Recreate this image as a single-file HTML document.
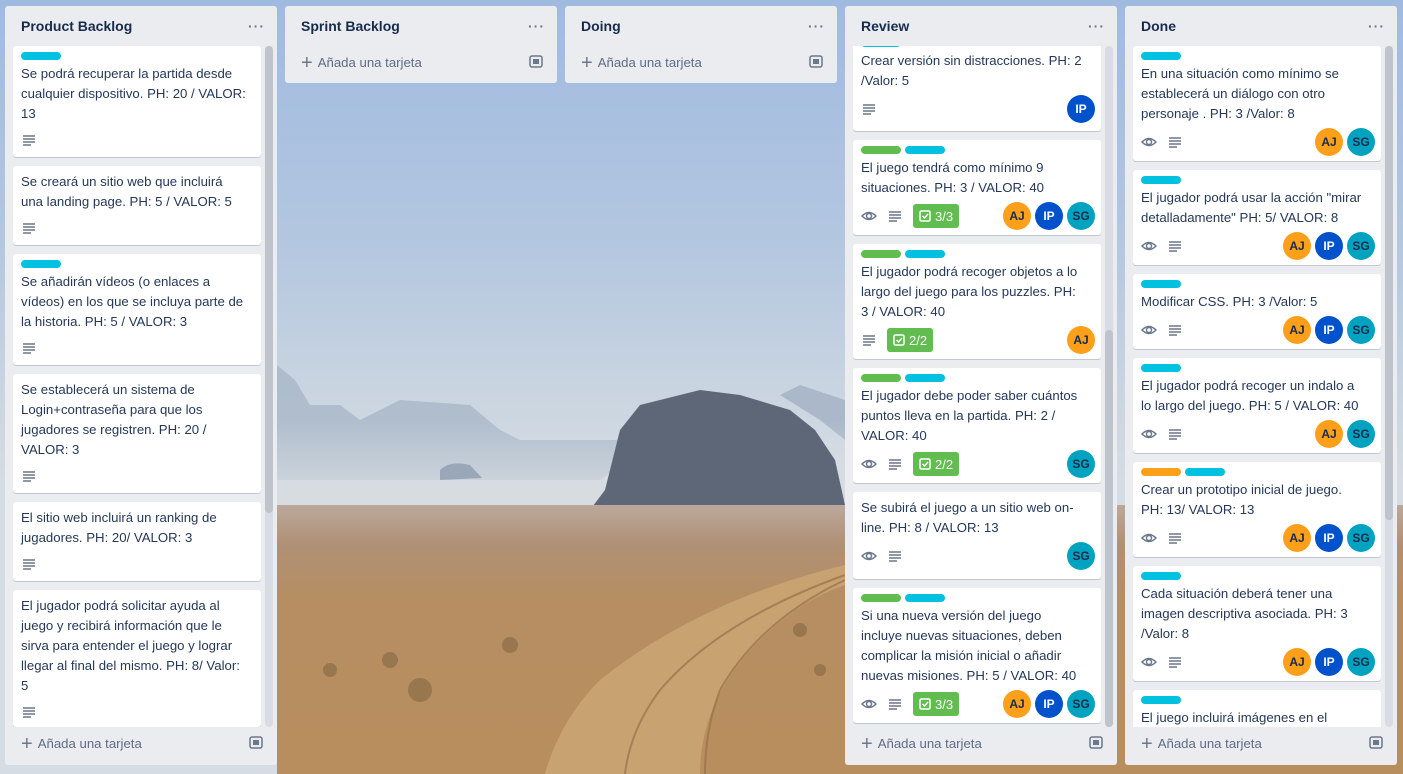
<!DOCTYPE html>
<html><head><meta charset="utf-8">
<style>
*{box-sizing:border-box;margin:0;padding:0}
html,body{width:1403px;height:774px;overflow:hidden}
body{font-family:"Liberation Sans",sans-serif;color:#172b4d;font-size:13px;position:relative;background:#a9bfdc}
#bg{position:absolute;left:0;top:0}
.list{position:absolute;top:6px;width:272px;height:759px;background:#ebecf0;border-radius:3px}
.list.short{height:77px}
.hdr{position:absolute;left:16px;top:10px;font-weight:bold;font-size:14px;color:#172b4d;line-height:20px}
.dots{position:absolute;right:12px;top:12px;font-size:14px;letter-spacing:1px;color:#6b778c;font-weight:bold}
.body{position:absolute;left:8px;top:40px;width:248px;height:681px;overflow:hidden}
.track{position:absolute;left:260px;top:40px;width:8px;height:681px;background:#dadce3;border-radius:4px}
.thumb{position:absolute;left:0;width:8px;background:#bfc3cc;border-radius:4px}
.card{position:absolute;left:0;width:248px;background:#fff;border-radius:3px;box-shadow:0 1px 0 #c1c7d0;padding:6px 8px 0 8px}
.labels{height:8px;margin-bottom:4px;display:flex;gap:4px}
.lb{width:40px;height:8px;border-radius:4px}
.g{background:#61bd4f}.c{background:#00c2e0}.o{background:#ff9f1a}
.t{line-height:20px;white-space:nowrap;font-size:13.2px;color:#253858}
.row{position:relative;height:28px;margin-top:4px;display:flex;align-items:center}
.ic{width:16px;height:16px;margin-right:10px;display:inline-block}
.chk{background:#61bd4f;color:#fff;border-radius:3px;height:24px;padding:0 6px;display:flex;align-items:center;font-size:13px;gap:4px}
.av{position:absolute;top:0;width:28px;height:28px;border-radius:50%;color:#fff;font-weight:bold;font-size:12px;text-align:center;line-height:28px}
.AJ{background:#ff9f1a;color:#172b4d}.IP{background:#0052cc}.SG{background:#00a3bf;color:#172b4d}
.add{position:absolute;left:16px;bottom:11px;color:#5e6c84;font-size:13.2px;line-height:20px}
.add b{font-weight:normal;font-size:20px;margin-right:5px;position:relative;top:2px;color:#6b778c}
.tmpl{position:absolute;right:14px;bottom:15px}
</style></head><body>
<svg id="bg" width="1403" height="774" viewBox="0 0 1403 774">
<defs>
<linearGradient id="sky" x1="0" y1="0" x2="0" y2="1">
<stop offset="0" stop-color="#a0badf"/><stop offset="0.3" stop-color="#b2c6e0"/><stop offset="0.5" stop-color="#c8d4e0"/><stop offset="0.62" stop-color="#d5dce3"/><stop offset="1" stop-color="#d5dce3"/></linearGradient>
<linearGradient id="gr" x1="0" y1="0" x2="0" y2="1">
<stop offset="0" stop-color="#bba89c"/><stop offset="0.15" stop-color="#b09075"/><stop offset="0.35" stop-color="#b68e62"/><stop offset="1" stop-color="#b88e5e"/></linearGradient>
<linearGradient id="haze" x1="0" y1="0" x2="0" y2="1"><stop offset="0" stop-color="#d5dce3" stop-opacity="0"/><stop offset="1" stop-color="#d8dcdf"/></linearGradient>
</defs>
<rect width="1403" height="774" fill="url(#sky)"/>
<path d="M277 365 L295 380 L310 405 L340 405 L360 420 L400 400 L470 405 L500 430 L520 440 L620 440 L640 450 L600 480 L277 480Z" fill="#a8b7c8" opacity="0.8"/>
<path d="M780 395 L800 385 L845 400 L845 440 L820 420Z" fill="#aab8c9"/>
<rect x="277" y="420" width="570" height="90" fill="url(#haze)"/>
<path d="M440 470 Q450 460 470 465 L482 478 L440 480Z" fill="#9aa7b8"/>
<path d="M590 510 L605 490 L620 430 L640 405 L700 390 L740 395 L790 410 L815 430 L835 460 L845 505 Z" fill="#5d6778"/>
<rect x="277" y="505" width="1126" height="269" fill="url(#gr)"/>
<path d="M845 565 Q700 600 600 680 Q560 720 545 774 L700 774 Q700 700 760 640 Q800 600 845 585Z" fill="#c9a272"/>
<path d="M845 575 Q720 620 660 690 Q630 730 625 774" stroke="#957049" stroke-width="2" fill="none" opacity="0.7"/>
<path d="M845 580 Q760 620 720 690 Q705 730 705 774" stroke="#957049" stroke-width="2" fill="none" opacity="0.7"/>
<g fill="#7a5f3e" opacity="0.5">
<circle cx="420" cy="690" r="12"/><circle cx="390" cy="660" r="8"/><circle cx="330" cy="670" r="7"/><circle cx="510" cy="645" r="8"/><circle cx="800" cy="630" r="7"/><circle cx="820" cy="670" r="6"/>
</g>
</svg>

<!-- Product Backlog -->
<div class="list" style="left:5px">
<div class="hdr">Product Backlog</div><div class="dots">···</div>
<div class="body">
<div class="card" style="top:0;height:111px"><div class="labels"><div class="lb c"></div></div><div class="t">Se podrá recuperar la partida desde<br>cualquier dispositivo. PH: 20 / VALOR:<br>13</div><div class="row" style="height:24px"><svg class="ic" viewBox="0 0 16 16"><path d="M2 4h12M2 7h12M2 10h12M2 13h8" stroke="#6b778c" stroke-width="1.5"/></svg></div></div>
<div class="card" style="top:120px;height:79px"><div class="t">Se creará un sitio web que incluirá<br>una landing page. PH: 5 / VALOR: 5</div><div class="row" style="height:24px"><svg class="ic" viewBox="0 0 16 16"><path d="M2 4h12M2 7h12M2 10h12M2 13h8" stroke="#6b778c" stroke-width="1.5"/></svg></div></div>
<div class="card" style="top:208px;height:111px"><div class="labels"><div class="lb c"></div></div><div class="t">Se añadirán vídeos (o enlaces a<br>vídeos) en los que se incluya parte de<br>la historia. PH: 5 / VALOR: 3</div><div class="row" style="height:24px"><svg class="ic" viewBox="0 0 16 16"><path d="M2 4h12M2 7h12M2 10h12M2 13h8" stroke="#6b778c" stroke-width="1.5"/></svg></div></div>
<div class="card" style="top:328px;height:119px"><div class="t">Se establecerá un sistema de<br>Login+contraseña para que los<br>jugadores se registren. PH: 20 /<br>VALOR: 3</div><div class="row" style="height:24px"><svg class="ic" viewBox="0 0 16 16"><path d="M2 4h12M2 7h12M2 10h12M2 13h8" stroke="#6b778c" stroke-width="1.5"/></svg></div></div>
<div class="card" style="top:456px;height:79px"><div class="t">El sitio web incluirá un ranking de<br>jugadores. PH: 20/ VALOR: 3</div><div class="row" style="height:24px"><svg class="ic" viewBox="0 0 16 16"><path d="M2 4h12M2 7h12M2 10h12M2 13h8" stroke="#6b778c" stroke-width="1.5"/></svg></div></div>
<div class="card" style="top:544px;height:137px"><div class="t">El jugador podrá solicitar ayuda al<br>juego y recibirá información que le<br>sirva para entender el juego y lograr<br>llegar al final del mismo. PH: 8/ Valor:<br>5</div><div class="row" style="height:24px"><svg class="ic" viewBox="0 0 16 16"><path d="M2 4h12M2 7h12M2 10h12M2 13h8" stroke="#6b778c" stroke-width="1.5"/></svg></div></div>
</div>
<div class="track"><div class="thumb" style="top:0;height:467px"></div></div>
<div class="add"><b>+</b>Añada una tarjeta</div>
<svg class="tmpl" width="14" height="14" viewBox="0 0 14 14"><rect x="1" y="1" width="12" height="11" rx="2" fill="none" stroke="#6b778c" stroke-width="1.5"/><rect x="4" y="4" width="6" height="5" fill="#6b778c"/></svg>
</div>

<!-- Sprint Backlog -->
<div class="list short" style="left:285px">
<div class="hdr">Sprint Backlog</div><div class="dots">···</div>
<div class="add" style="bottom:10px"><b>+</b>Añada una tarjeta</div>
<svg class="tmpl" width="14" height="14" viewBox="0 0 14 14" style="bottom:14px"><rect x="1" y="1" width="12" height="11" rx="2" fill="none" stroke="#6b778c" stroke-width="1.5"/><rect x="4" y="4" width="6" height="5" fill="#6b778c"/></svg>
</div>

<!-- Doing -->
<div class="list short" style="left:565px">
<div class="hdr">Doing</div><div class="dots">···</div>
<div class="add" style="bottom:10px"><b>+</b>Añada una tarjeta</div>
<svg class="tmpl" width="14" height="14" viewBox="0 0 14 14" style="bottom:14px"><rect x="1" y="1" width="12" height="11" rx="2" fill="none" stroke="#6b778c" stroke-width="1.5"/><rect x="4" y="4" width="6" height="5" fill="#6b778c"/></svg>
</div>

<!-- Review -->
<div class="list" style="left:845px">
<div class="hdr">Review</div><div class="dots">···</div>
<div class="body">
<div class="card" style="top:-13px;height:98px"><div class="labels"><div class="lb c"></div></div><div class="t">Crear versión sin distracciones. PH: 2<br>/Valor: 5</div><div class="row"><svg class="ic" viewBox="0 0 16 16"><path d="M2 4h12M2 7h12M2 10h12M2 13h8" stroke="#6b778c" stroke-width="1.5"/></svg><div class="av IP" style="right:-2px">IP</div></div></div>
<div class="card" style="top:94px;height:95px"><div class="labels"><div class="lb g"></div><div class="lb c"></div></div><div class="t">El juego tendrá como mínimo 9<br>situaciones. PH: 3 / VALOR: 40</div><div class="row"><svg class="ic" viewBox="0 0 16 16"><path d="M1 8Q8 1 15 8Q8 15 1 8Z" fill="none" stroke="#6b778c" stroke-width="1.5"/><circle cx="8" cy="8" r="2.5" fill="none" stroke="#6b778c" stroke-width="1.5"/></svg><svg class="ic" viewBox="0 0 16 16"><path d="M2 4h12M2 7h12M2 10h12M2 13h8" stroke="#6b778c" stroke-width="1.5"/></svg><div class="chk"><svg width="12" height="12" viewBox="0 0 12 12"><rect x="1" y="1" width="10" height="10" rx="1.5" fill="none" stroke="#fff" stroke-width="1.5"/><path d="M3.5 6l2 2 3.5-4" fill="none" stroke="#fff" stroke-width="1.5"/></svg>3/3</div><div class="av AJ" style="right:62px">AJ</div><div class="av IP" style="right:30px">IP</div><div class="av SG" style="right:-2px">SG</div></div></div>
<div class="card" style="top:198px;height:115px"><div class="labels"><div class="lb g"></div><div class="lb c"></div></div><div class="t">El jugador podrá recoger objetos a lo<br>largo del juego para los puzzles. PH:<br>3 / VALOR: 40</div><div class="row"><svg class="ic" viewBox="0 0 16 16"><path d="M2 4h12M2 7h12M2 10h12M2 13h8" stroke="#6b778c" stroke-width="1.5"/></svg><div class="chk"><svg width="12" height="12" viewBox="0 0 12 12"><rect x="1" y="1" width="10" height="10" rx="1.5" fill="none" stroke="#fff" stroke-width="1.5"/><path d="M3.5 6l2 2 3.5-4" fill="none" stroke="#fff" stroke-width="1.5"/></svg>2/2</div><div class="av AJ" style="right:-2px">AJ</div></div></div>
<div class="card" style="top:322px;height:115px"><div class="labels"><div class="lb g"></div><div class="lb c"></div></div><div class="t">El jugador debe poder saber cuántos<br>puntos lleva en la partida. PH: 2 /<br>VALOR: 40</div><div class="row"><svg class="ic" viewBox="0 0 16 16"><path d="M1 8Q8 1 15 8Q8 15 1 8Z" fill="none" stroke="#6b778c" stroke-width="1.5"/><circle cx="8" cy="8" r="2.5" fill="none" stroke="#6b778c" stroke-width="1.5"/></svg><svg class="ic" viewBox="0 0 16 16"><path d="M2 4h12M2 7h12M2 10h12M2 13h8" stroke="#6b778c" stroke-width="1.5"/></svg><div class="chk"><svg width="12" height="12" viewBox="0 0 12 12"><rect x="1" y="1" width="10" height="10" rx="1.5" fill="none" stroke="#fff" stroke-width="1.5"/><path d="M3.5 6l2 2 3.5-4" fill="none" stroke="#fff" stroke-width="1.5"/></svg>2/2</div><div class="av SG" style="right:-2px">SG</div></div></div>
<div class="card" style="top:446px;height:87px"><div class="t">Se subirá el juego a un sitio web on-<br>line. PH: 8 / VALOR: 13</div><div class="row"><svg class="ic" viewBox="0 0 16 16"><path d="M1 8Q8 1 15 8Q8 15 1 8Z" fill="none" stroke="#6b778c" stroke-width="1.5"/><circle cx="8" cy="8" r="2.5" fill="none" stroke="#6b778c" stroke-width="1.5"/></svg><svg class="ic" viewBox="0 0 16 16"><path d="M2 4h12M2 7h12M2 10h12M2 13h8" stroke="#6b778c" stroke-width="1.5"/></svg><div class="av SG" style="right:-2px">SG</div></div></div>
<div class="card" style="top:542px;height:135px"><div class="labels"><div class="lb g"></div><div class="lb c"></div></div><div class="t">Si una nueva versión del juego<br>incluye nuevas situaciones, deben<br>complicar la misión inicial o añadir<br>nuevas misiones. PH: 5 / VALOR: 40</div><div class="row"><svg class="ic" viewBox="0 0 16 16"><path d="M1 8Q8 1 15 8Q8 15 1 8Z" fill="none" stroke="#6b778c" stroke-width="1.5"/><circle cx="8" cy="8" r="2.5" fill="none" stroke="#6b778c" stroke-width="1.5"/></svg><svg class="ic" viewBox="0 0 16 16"><path d="M2 4h12M2 7h12M2 10h12M2 13h8" stroke="#6b778c" stroke-width="1.5"/></svg><div class="chk"><svg width="12" height="12" viewBox="0 0 12 12"><rect x="1" y="1" width="10" height="10" rx="1.5" fill="none" stroke="#fff" stroke-width="1.5"/><path d="M3.5 6l2 2 3.5-4" fill="none" stroke="#fff" stroke-width="1.5"/></svg>3/3</div><div class="av AJ" style="right:62px">AJ</div><div class="av IP" style="right:30px">IP</div><div class="av SG" style="right:-2px">SG</div></div></div>
</div>
<div class="track"><div class="thumb" style="top:284px;height:397px"></div></div>
<div class="add"><b>+</b>Añada una tarjeta</div>
<svg class="tmpl" width="14" height="14" viewBox="0 0 14 14"><rect x="1" y="1" width="12" height="11" rx="2" fill="none" stroke="#6b778c" stroke-width="1.5"/><rect x="4" y="4" width="6" height="5" fill="#6b778c"/></svg>
</div>

<!-- Done -->
<div class="list" style="left:1125px">
<div class="hdr">Done</div><div class="dots">···</div>
<div class="body">
<div class="card" style="top:0;height:115px"><div class="labels"><div class="lb c"></div></div><div class="t">En una situación como mínimo se<br>establecerá un diálogo con otro<br>personaje . PH: 3 /Valor: 8</div><div class="row"><svg class="ic" viewBox="0 0 16 16"><path d="M1 8Q8 1 15 8Q8 15 1 8Z" fill="none" stroke="#6b778c" stroke-width="1.5"/><circle cx="8" cy="8" r="2.5" fill="none" stroke="#6b778c" stroke-width="1.5"/></svg><svg class="ic" viewBox="0 0 16 16"><path d="M2 4h12M2 7h12M2 10h12M2 13h8" stroke="#6b778c" stroke-width="1.5"/></svg><div class="av AJ" style="right:30px">AJ</div><div class="av SG" style="right:-2px">SG</div></div></div>
<div class="card" style="top:124px;height:95px"><div class="labels"><div class="lb c"></div></div><div class="t">El jugador podrá usar la acción "mirar<br>detalladamente" PH: 5/ VALOR: 8</div><div class="row"><svg class="ic" viewBox="0 0 16 16"><path d="M1 8Q8 1 15 8Q8 15 1 8Z" fill="none" stroke="#6b778c" stroke-width="1.5"/><circle cx="8" cy="8" r="2.5" fill="none" stroke="#6b778c" stroke-width="1.5"/></svg><svg class="ic" viewBox="0 0 16 16"><path d="M2 4h12M2 7h12M2 10h12M2 13h8" stroke="#6b778c" stroke-width="1.5"/></svg><div class="av AJ" style="right:62px">AJ</div><div class="av IP" style="right:30px">IP</div><div class="av SG" style="right:-2px">SG</div></div></div>
<div class="card" style="top:228px;height:75px"><div class="labels"><div class="lb c"></div></div><div class="t">Modificar CSS. PH: 3 /Valor: 5</div><div class="row"><svg class="ic" viewBox="0 0 16 16"><path d="M1 8Q8 1 15 8Q8 15 1 8Z" fill="none" stroke="#6b778c" stroke-width="1.5"/><circle cx="8" cy="8" r="2.5" fill="none" stroke="#6b778c" stroke-width="1.5"/></svg><svg class="ic" viewBox="0 0 16 16"><path d="M2 4h12M2 7h12M2 10h12M2 13h8" stroke="#6b778c" stroke-width="1.5"/></svg><div class="av AJ" style="right:62px">AJ</div><div class="av IP" style="right:30px">IP</div><div class="av SG" style="right:-2px">SG</div></div></div>
<div class="card" style="top:312px;height:95px"><div class="labels"><div class="lb c"></div></div><div class="t">El jugador podrá recoger un indalo a<br>lo largo del juego. PH: 5 / VALOR: 40</div><div class="row"><svg class="ic" viewBox="0 0 16 16"><path d="M1 8Q8 1 15 8Q8 15 1 8Z" fill="none" stroke="#6b778c" stroke-width="1.5"/><circle cx="8" cy="8" r="2.5" fill="none" stroke="#6b778c" stroke-width="1.5"/></svg><svg class="ic" viewBox="0 0 16 16"><path d="M2 4h12M2 7h12M2 10h12M2 13h8" stroke="#6b778c" stroke-width="1.5"/></svg><div class="av AJ" style="right:30px">AJ</div><div class="av SG" style="right:-2px">SG</div></div></div>
<div class="card" style="top:416px;height:95px"><div class="labels"><div class="lb o"></div><div class="lb c"></div></div><div class="t">Crear un prototipo inicial de juego.<br>PH: 13/ VALOR: 13</div><div class="row"><svg class="ic" viewBox="0 0 16 16"><path d="M1 8Q8 1 15 8Q8 15 1 8Z" fill="none" stroke="#6b778c" stroke-width="1.5"/><circle cx="8" cy="8" r="2.5" fill="none" stroke="#6b778c" stroke-width="1.5"/></svg><svg class="ic" viewBox="0 0 16 16"><path d="M2 4h12M2 7h12M2 10h12M2 13h8" stroke="#6b778c" stroke-width="1.5"/></svg><div class="av AJ" style="right:62px">AJ</div><div class="av IP" style="right:30px">IP</div><div class="av SG" style="right:-2px">SG</div></div></div>
<div class="card" style="top:520px;height:115px"><div class="labels"><div class="lb c"></div></div><div class="t">Cada situación deberá tener una<br>imagen descriptiva asociada. PH: 3<br>/Valor: 8</div><div class="row"><svg class="ic" viewBox="0 0 16 16"><path d="M1 8Q8 1 15 8Q8 15 1 8Z" fill="none" stroke="#6b778c" stroke-width="1.5"/><circle cx="8" cy="8" r="2.5" fill="none" stroke="#6b778c" stroke-width="1.5"/></svg><svg class="ic" viewBox="0 0 16 16"><path d="M2 4h12M2 7h12M2 10h12M2 13h8" stroke="#6b778c" stroke-width="1.5"/></svg><div class="av AJ" style="right:62px">AJ</div><div class="av IP" style="right:30px">IP</div><div class="av SG" style="right:-2px">SG</div></div></div>
<div class="card" style="top:644px;height:100px"><div class="labels"><div class="lb c"></div></div><div class="t">El juego incluirá imágenes en el</div></div>
</div>
<div class="track"><div class="thumb" style="top:0;height:474px"></div></div>
<div class="add"><b>+</b>Añada una tarjeta</div>
<svg class="tmpl" width="14" height="14" viewBox="0 0 14 14"><rect x="1" y="1" width="12" height="11" rx="2" fill="none" stroke="#6b778c" stroke-width="1.5"/><rect x="4" y="4" width="6" height="5" fill="#6b778c"/></svg>
</div>
</body></html>
